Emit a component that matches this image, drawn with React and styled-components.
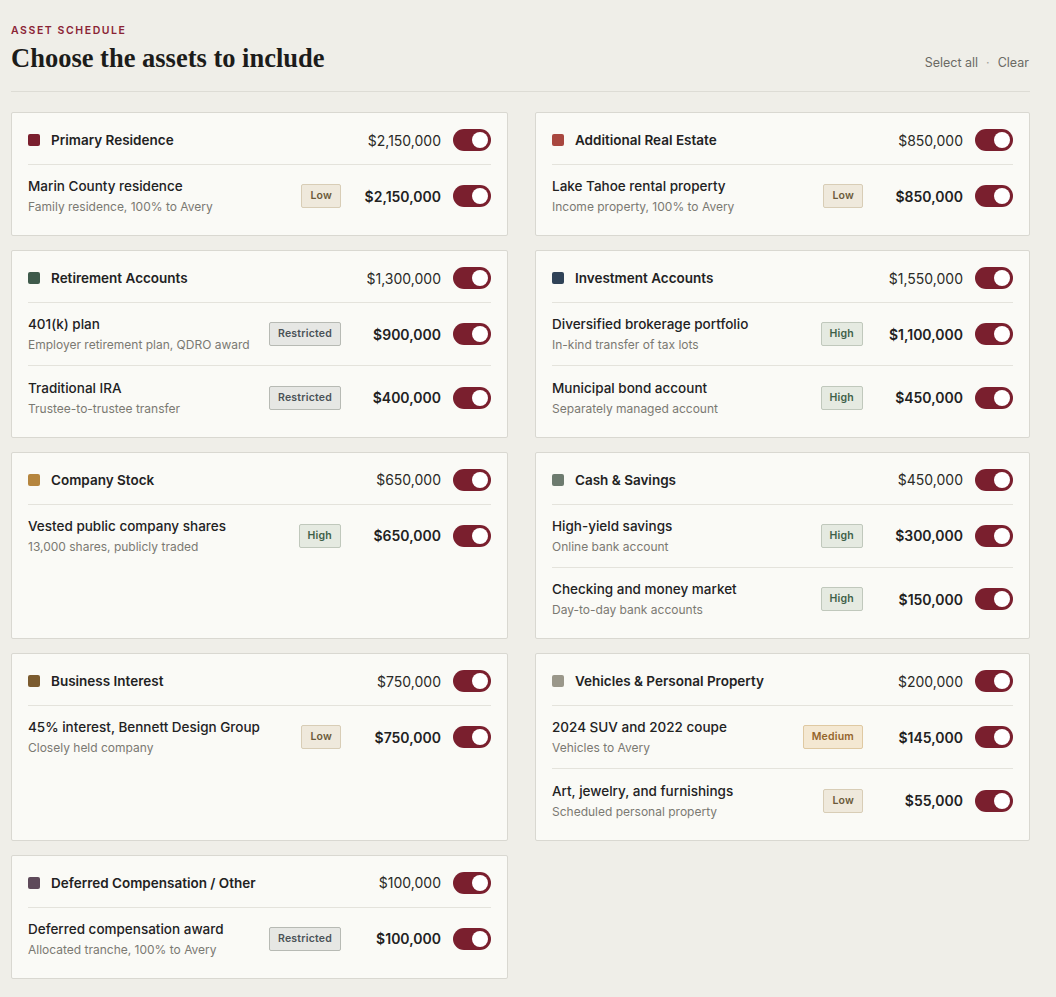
import React, { useState } from 'react';
import styled, { createGlobalStyle } from 'styled-components';

const GlobalStyle = createGlobalStyle`
  * { box-sizing: border-box; }
  body {
    margin: 0;
    background: #efeee8;
    font-family: Inter, "Noto Sans", sans-serif;
    color: #1f1f1c;
  }
`;

const tones = {
  Low: { bg: '#efe9dc', border: '#d8cdb6', color: '#6b5a3a' },
  Restricted: { bg: '#e6e7e4', border: '#b7bab4', color: '#4a5257' },
  High: { bg: '#e5eae1', border: '#c0c8bc', color: '#3e6048' },
  Medium: { bg: '#f4e8d2', border: '#dfc9a2', color: '#94652c' },
};

const groups = [
  {
    title: 'Primary Residence', color: '#7a1f2e', total: '$2,150,000',
    items: [{ name: 'Marin County residence', note: 'Family residence, 100% to Avery', tag: 'Low', value: '$2,150,000' }],
  },
  {
    title: 'Additional Real Estate', color: '#a8473f', total: '$850,000',
    items: [{ name: 'Lake Tahoe rental property', note: 'Income property, 100% to Avery', tag: 'Low', value: '$850,000' }],
  },
  {
    title: 'Retirement Accounts', color: '#3f5a4b', total: '$1,300,000',
    items: [
      { name: '401(k) plan', note: 'Employer retirement plan, QDRO award', tag: 'Restricted', value: '$900,000' },
      { name: 'Traditional IRA', note: 'Trustee-to-trustee transfer', tag: 'Restricted', value: '$400,000' },
    ],
  },
  {
    title: 'Investment Accounts', color: '#2f4257', total: '$1,550,000',
    items: [
      { name: 'Diversified brokerage portfolio', note: 'In-kind transfer of tax lots', tag: 'High', value: '$1,100,000' },
      { name: 'Municipal bond account', note: 'Separately managed account', tag: 'High', value: '$450,000' },
    ],
  },
  {
    title: 'Company Stock', color: '#b5853e', total: '$650,000',
    items: [{ name: 'Vested public company shares', note: '13,000 shares, publicly traded', tag: 'High', value: '$650,000' }],
  },
  {
    title: 'Cash & Savings', color: '#6d7b6f', total: '$450,000',
    items: [
      { name: 'High-yield savings', note: 'Online bank account', tag: 'High', value: '$300,000' },
      { name: 'Checking and money market', note: 'Day-to-day bank accounts', tag: 'High', value: '$150,000' },
    ],
  },
  {
    title: 'Business Interest', color: '#7b5b2f', total: '$750,000',
    items: [{ name: '45% interest, Bennett Design Group', note: 'Closely held company', tag: 'Low', value: '$750,000' }],
  },
  {
    title: 'Vehicles & Personal Property', color: '#9a978a', total: '$200,000',
    items: [
      { name: '2024 SUV and 2022 coupe', note: 'Vehicles to Avery', tag: 'Medium', value: '$145,000' },
      { name: 'Art, jewelry, and furnishings', note: 'Scheduled personal property', tag: 'Low', value: '$55,000' },
    ],
  },
  {
    title: 'Deferred Compensation / Other', color: '#5e4a5a', total: '$100,000',
    items: [{ name: 'Deferred compensation award', note: 'Allocated tranche, 100% to Avery', tag: 'Restricted', value: '$100,000' }],
  },
];

const Page = styled.div`
  padding: 24px 26px 18px 11px;
`;

const Header = styled.header`
  display: flex;
  align-items: flex-end;
  justify-content: space-between;
  padding-bottom: 17px;
  border-bottom: 1px solid #dddcd5;
  margin-bottom: 20px;
`;

const Eyebrow = styled.div`
  font-size: 10.5px;
  font-weight: 600;
  letter-spacing: 0.15em;
  color: #8a2335;
  text-transform: uppercase;
  line-height: 14px;
`;

const Title = styled.h1`
  margin: 4px 0 0;
  font-family: "Liberation Serif", "DejaVu Serif", serif;
  font-weight: 700;
  font-size: 26.5px;
  line-height: 32px;
  color: #1c1c1a;
`;

const Actions = styled.div`
  display: flex;
  gap: 8px;
  font-size: 12.5px;
  color: #6b6a64;
  padding-bottom: 4px;
  padding-right: 1px;
`;

const Link = styled.span`
  cursor: pointer;
`;

const Dot = styled.span`
  color: #a5a49d;
`;

const Grid = styled.div`
  display: grid;
  grid-template-columns: 497px 495px;
  column-gap: 27px;
  row-gap: 14px;
`;

const Card = styled.section`
  background: #fafaf6;
  border: 1px solid #d9d8d1;
  border-radius: 2px;
  padding: 16px 16px 8px;
`;

const CardHead = styled.div`
  display: flex;
  align-items: center;
  padding-bottom: 13px;
  border-bottom: 1px solid #e4e3dc;
`;

const Swatch = styled.span`
  width: 12px;
  height: 12px;
  border-radius: 2px;
  background: ${p => p.$color};
  margin-right: 11px;
  flex-shrink: 0;
`;

const GroupTitle = styled.div`
  flex: 1;
  font-size: 13.5px;
  font-weight: 600;
  color: #22221f;
`;

const Total = styled.div`
  font-size: 14px;
  color: #2a2a27;
  margin-right: 12px;
`;

const Row = styled.div`
  display: flex;
  align-items: center;
  padding: 11px 0;
  & + & {
    padding-top: 11.5px;
    border-top: 1px solid #e4e3dc;
  }
`;

const Info = styled.div`
  flex: 1;
  min-width: 0;
`;

const Name = styled.div`
  font-size: 13.5px;
  font-weight: 500;
  line-height: 20px;
  color: #22221f;
`;

const Note = styled.div`
  font-size: 12px;
  line-height: 18px;
  margin-top: 2px;
  color: #7a7972;
`;

const Badge = styled.span`
  font-size: 10.5px;
  font-weight: 600;
  line-height: 22px;
  padding: 0 8px;
  border-radius: 2px;
  letter-spacing: 0.02em;
  background: ${p => tones[p.$tone].bg};
  border: 1px solid ${p => tones[p.$tone].border};
  color: ${p => tones[p.$tone].color};
`;

const Amount = styled.div`
  width: 100px;
  text-align: right;
  font-size: 14px;
  font-weight: 600;
  color: #22221f;
  margin-right: 12px;
`;

const Track = styled.button`
  width: 38px;
  height: 22px;
  border: none;
  border-radius: 11px;
  padding: 0;
  background: ${p => (p.$on ? '#7a1f2e' : '#c9c7bf')};
  position: relative;
  cursor: pointer;
  flex-shrink: 0;
  &::after {
    content: '';
    position: absolute;
    top: 3px;
    left: ${p => (p.$on ? '19px' : '3px')};
    width: 16px;
    height: 16px;
    border-radius: 50%;
    background: #fff;
  }
`;

const Toggle = ({ initial = true }) => {
  const [on, setOn] = useState(initial);
  return <Track $on={on} onClick={() => setOn(!on)} aria-pressed={on} />;
};

const AssetCard = ({ group }) => (
  <Card>
    <CardHead>
      <Swatch $color={group.color} />
      <GroupTitle>{group.title}</GroupTitle>
      <Total>{group.total}</Total>
      <Toggle />
    </CardHead>
    {group.items.map(item => (
      <Row key={item.name}>
        <Info>
          <Name>{item.name}</Name>
          <Note>{item.note}</Note>
        </Info>
        <Badge $tone={item.tag}>{item.tag}</Badge>
        <Amount>{item.value}</Amount>
        <Toggle />
      </Row>
    ))}
  </Card>
);

export default function App() {
  return (
    <>
      <GlobalStyle />
      <Page>
        <Header>
          <div>
            <Eyebrow>Asset schedule</Eyebrow>
            <Title>Choose the assets to include</Title>
          </div>
          <Actions>
            <Link>Select all</Link>
            <Dot>·</Dot>
            <Link>Clear</Link>
          </Actions>
        </Header>
        <Grid>
          {groups.map(g => (
            <AssetCard key={g.title} group={g} />
          ))}
        </Grid>
      </Page>
    </>
  );
}
